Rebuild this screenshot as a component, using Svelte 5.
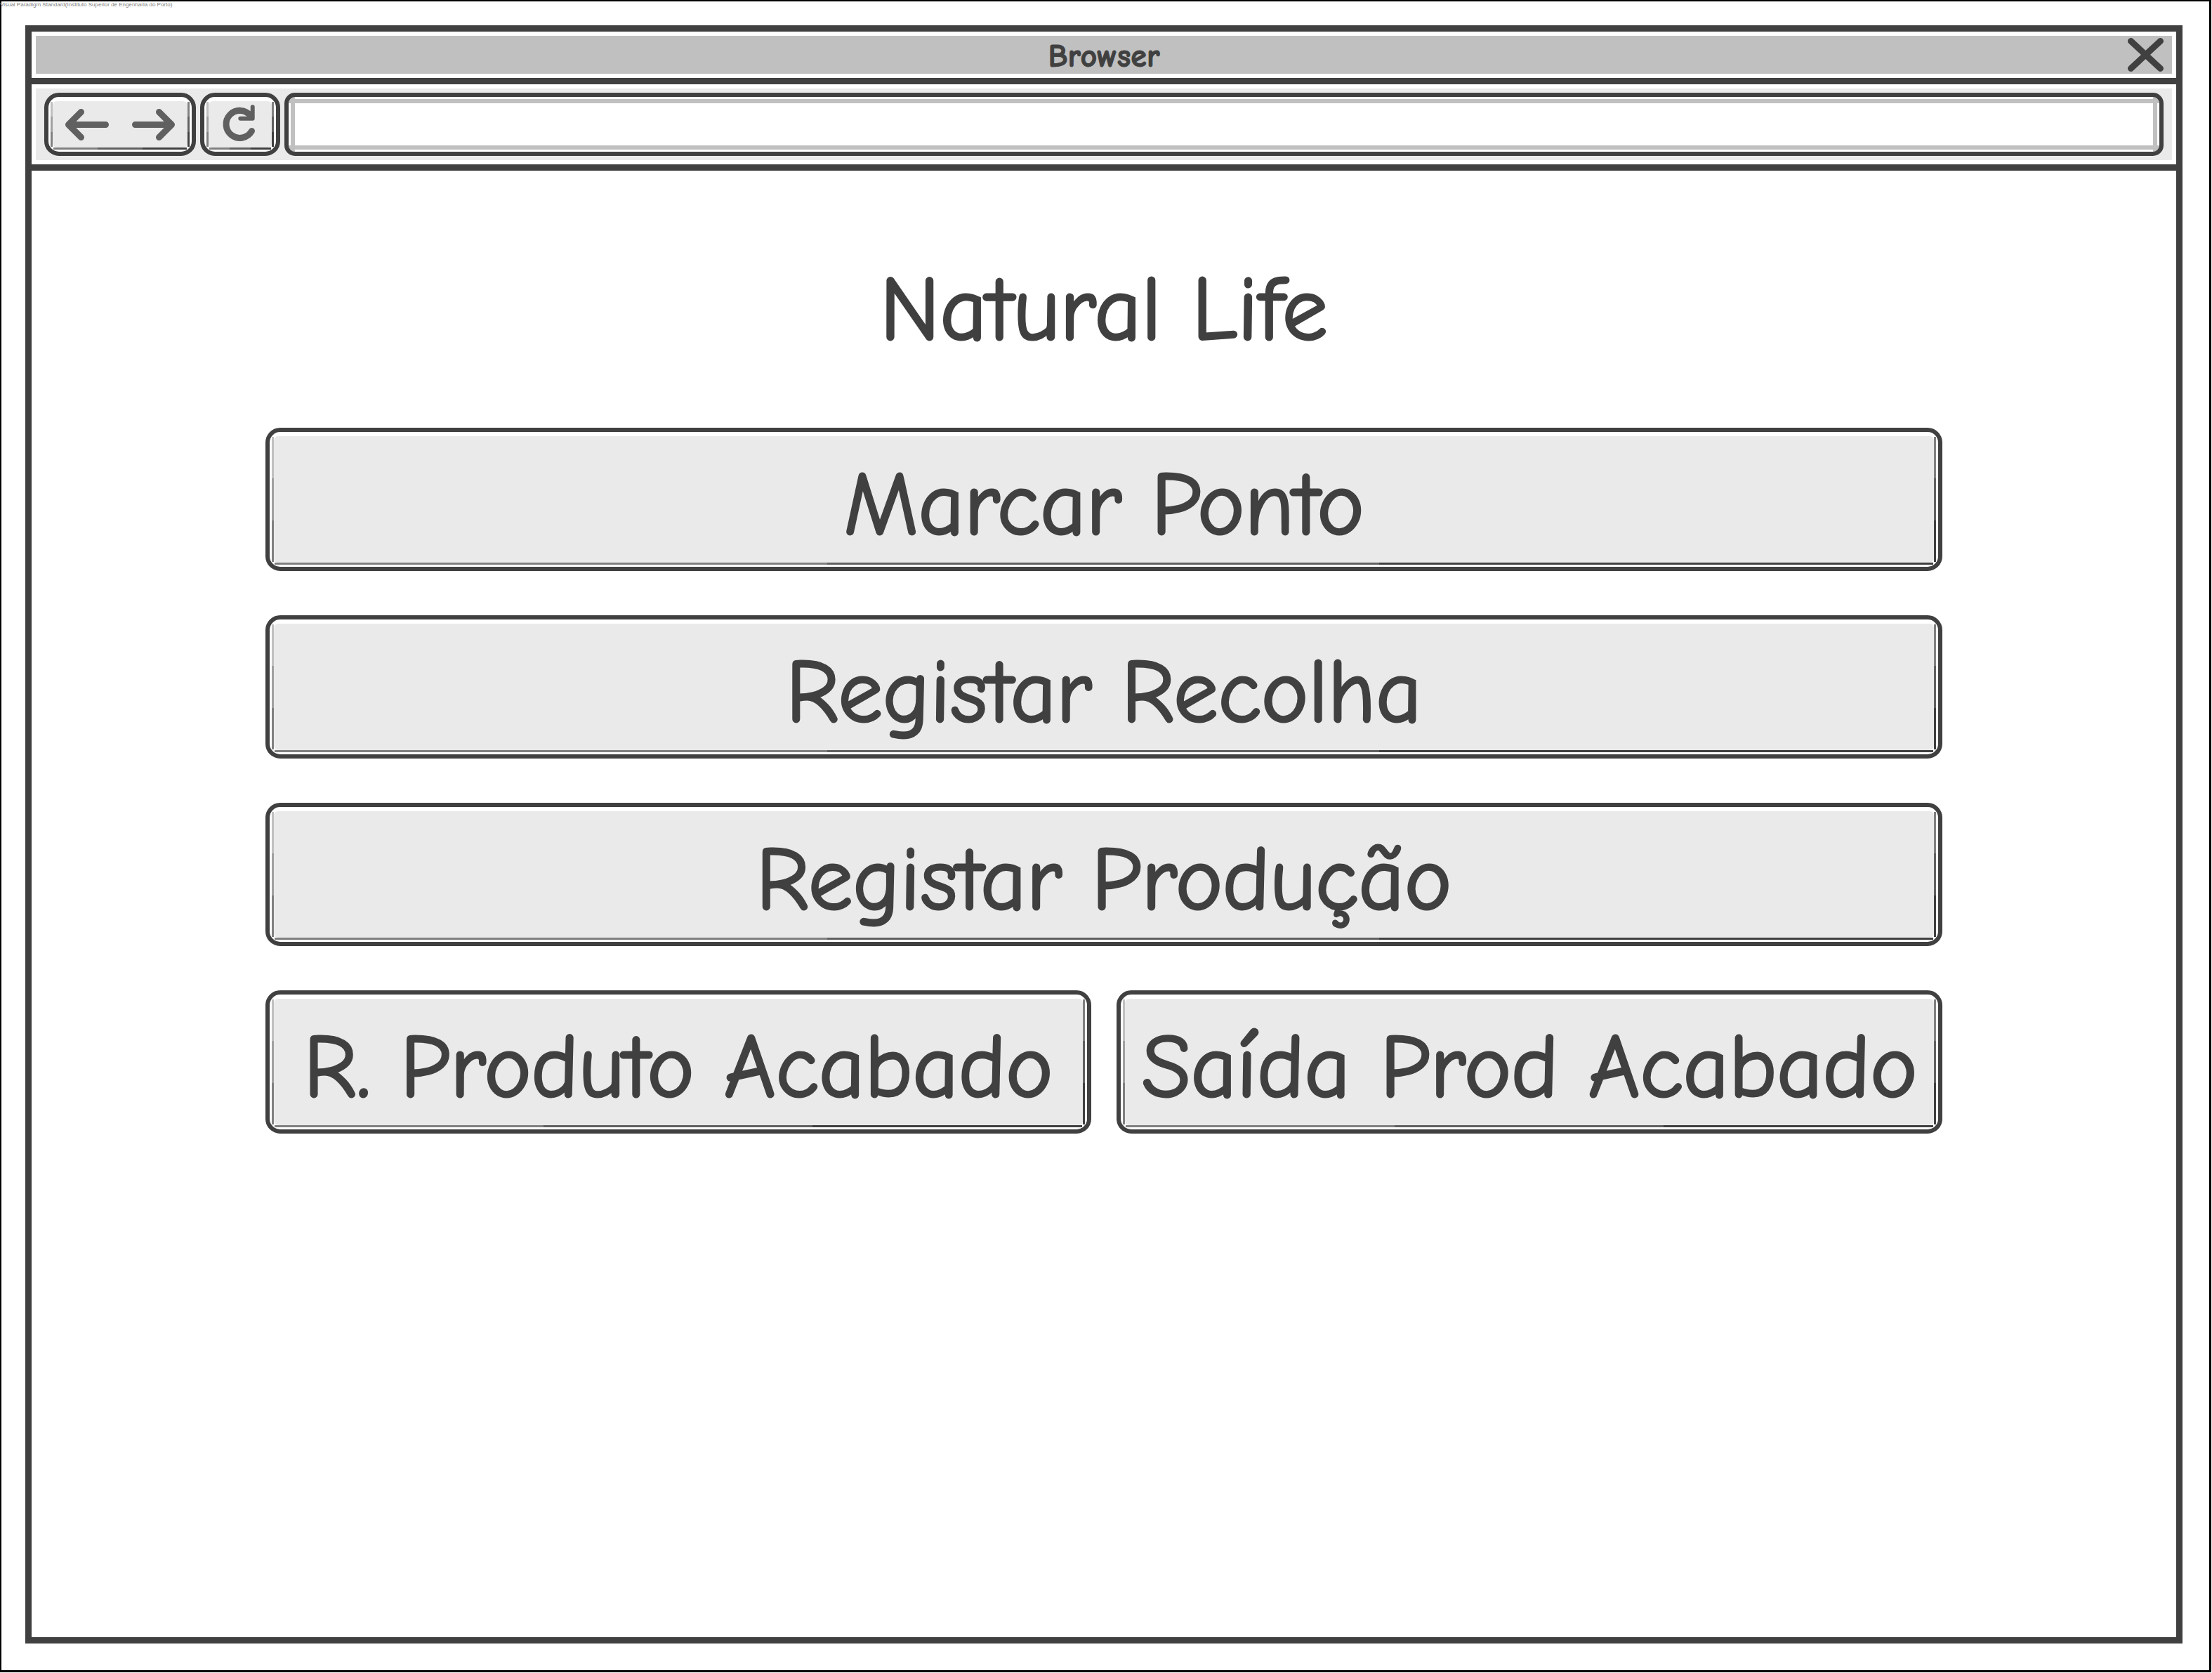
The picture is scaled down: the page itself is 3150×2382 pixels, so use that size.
<script>
  const rows = [
    ['Marcar Ponto'],
    ['Registar Recolha'],
    ['Registar Produção'],
    ['R. Produto Acabado', 'Saída Prod Acabado']
  ];
  let address = $state('');
</script>

<div class="sheet">
  <p class="watermark">Visual Paradigm Standard(Instituto Superior de Engenharia do Porto)</p>

  <div class="window">
    <header class="titlebar">
      <div class="titlebar-fill">
        <span class="title">Browser</span>
        <button class="plain close" type="button" aria-label="Close">
          <svg width="51" height="48" viewBox="0 0 51 48" aria-hidden="true">
            <path d="M4.5 4.5 46.5 43.5M46.5 4.5 4.5 43.5" />
          </svg>
        </button>
      </div>
    </header>

    <nav class="toolbar" aria-label="Browser controls">
      <div class="toolbar-fill">
        <div class="bevel">
          <div class="face">
            <button class="plain" type="button" aria-label="Back">
              <svg width="96" height="66" viewBox="0 0 96 66" aria-hidden="true">
                <path d="M75.5 33.5H22.5M40.5 15.5l-18 18 18 18" />
              </svg>
            </button>
            <button class="plain" type="button" aria-label="Forward">
              <svg width="96" height="66" viewBox="0 0 96 66" aria-hidden="true">
                <path d="M21.5 33.5H73.5M55.5 15.5l18 18-18 18" />
              </svg>
            </button>
          </div>
        </div>
        <button class="bevel" type="button" aria-label="Reload">
          <span class="face">
            <svg width="90" height="66" viewBox="0 0 90 66" aria-hidden="true">
              <path d="M60 21A19.5 19.5 0 1 0 61.5 42.5" />
              <path class="thin" d="M62.7 8.3V24.7H45.3" />
            </svg>
          </span>
        </button>
        <input class="address" type="text" aria-label="Address" bind:value={address} />
      </div>
    </nav>

    <main>
      <h1>Natural Life</h1>
      <div class="menu">
        {#each rows as row}
          <div class="row">
            {#each row as label}
              <button class="bevel action" type="button"><span class="face">{label}</span></button>
            {/each}
          </div>
        {/each}
      </div>
    </main>
  </div>
</div>

<style>
  :global(body) {
    background: #fff;
  }

  .sheet,
  .sheet * {
    box-sizing: border-box;
  }

  .sheet {
    display: flex;
    flex-direction: column;
    min-height: calc(100vh - 1px);
    margin: 0 1px 1px 0;
    padding: 0 38px 38px 34px;
    border: solid #000;
    border-width: 2px 3px 3px 2px;
    color: #404040;
    font-family: 'Comic Sans MS', 'Comic Neue', Lato, sans-serif;
  }

  .watermark {
    height: 34px;
    margin: 0 0 0 -36px;
    color: #808080;
    font: 8px/10px 'Liberation Sans', Arial, sans-serif;
    white-space: nowrap;
  }

  .window {
    display: flex;
    flex: 1;
    flex-direction: column;
    border: 9px solid #404040;
  }

  .titlebar,
  .toolbar {
    padding: 6px;
    border-bottom: 9px solid #404040;
  }

  .titlebar-fill {
    display: grid;
    grid-template-columns: 1fr auto 1fr;
    align-items: center;
    height: 54px;
    padding-right: 12px;
    padding-left: 12px;
    background: #c0c0c0;
  }

  .title {
    grid-column: 2;
    padding-top: 6px;
    font-size: 46px;
    font-weight: 700;
    line-height: 48px;
    -webkit-text-stroke: 1px currentColor;
  }

  .plain {
    display: block;
    margin: 0;
    padding: 0;
    border: 0;
    background: none;
  }

  .close {
    justify-self: end;
  }

  svg {
    display: block;
    fill: none;
    stroke: #606060;
    stroke-linecap: round;
    stroke-linejoin: round;
    stroke-width: 9px;
  }

  .close svg {
    stroke: #404040;
  }

  .thin {
    stroke-width: 6px;
  }

  .toolbar-fill {
    display: flex;
    gap: 6px;
    padding: 6px 12px;
    background: #eaeaea;
  }

  /* Raised box: dark outline, white rim, three-step shade lines on three sides */
  .bevel {
    --light: #c0c0c0 0 33.3%, #a0a0a0 33.3% 66.6%, #808080 66.6%;
    --dark: #808080 0 33.3%, #606060 33.3% 66.6%, #404040 66.6%;
    flex: none;
    margin: 0;
    padding: 6px;
    border: 6px solid #404040;
    border-radius: 21px;
    background:
      linear-gradient(to bottom, var(--light)) left 3px center / 3px calc(100% - 14px) no-repeat padding-box,
      linear-gradient(to bottom, var(--dark)) right 3px center / 3px calc(100% - 14px) no-repeat padding-box,
      linear-gradient(to right, var(--dark)) center bottom 3px / calc(100% - 14px) 3px no-repeat padding-box,
      #fff;
    color: inherit;
    font: inherit;
  }

  .face {
    display: flex;
    justify-content: center;
    border-radius: 6px;
    background: #eaeaea;
  }

  .address {
    --line: linear-gradient(#c0c0c0, #c0c0c0);
    flex: 1;
    min-width: 0;
    margin: 0;
    padding: 0 18px;
    border: 6px solid #404040;
    border-radius: 15px;
    background:
      var(--line) left top 3px / 100% 6px no-repeat padding-box,
      var(--line) left bottom 3px / 100% 6px no-repeat padding-box,
      var(--line) left 3px top / 6px 100% no-repeat padding-box,
      var(--line) right 3px top / 6px 100% no-repeat padding-box,
      #fff;
    color: inherit;
    font: inherit;
    font-size: 44px;
  }

  main {
    padding: 126px 333px;
  }

  h1 {
    margin: 0 0 96px;
    font-size: 130px;
    font-weight: 400;
    line-height: 144px;
    text-align: center;
    -webkit-text-stroke: 3px currentColor;
  }

  .menu {
    display: grid;
    gap: 63px;
  }

  .row {
    display: flex;
    gap: 36px;
  }

  .action {
    flex: 1 1 0;
    font-size: 127px;
    line-height: 164px;
    white-space: nowrap;
    -webkit-text-stroke: 3px currentColor;
  }

  .action .face {
    padding-top: 16px;
  }
</style>
